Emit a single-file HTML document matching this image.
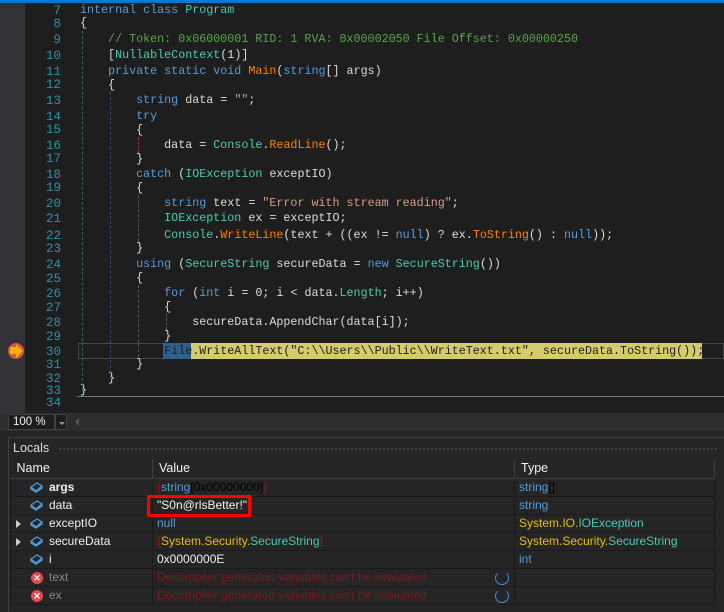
<!DOCTYPE html>
<html><head><style>
*{margin:0;padding:0;box-sizing:border-box}
body{width:724px;height:612px;background:#252526;position:relative;overflow:hidden;font-family:"Liberation Sans",sans-serif}
#ed{position:absolute;left:0;top:0;width:724px;height:413px;background:#1e1e1e}
#topbar{position:absolute;left:0;top:0;width:724px;height:3px;background:#007acc}
#lm{position:absolute;left:0;top:3px;width:25px;height:410px;background:#333337}
.ln{position:absolute;left:25px;width:36px;text-align:right;color:#2b91af;font:12.5px "Liberation Mono",monospace}
.c{position:absolute;left:80px;white-space:pre;color:#dcdcdc;font:11.7px "Liberation Mono",monospace;line-height:14px}
.k{color:#569cd6}.t{color:#4ec9b0}.m{color:#ff8000}.s{color:#d69d85}.cm{color:#57a64a}
.g{position:absolute;border-left:1px dashed}
#zb{position:absolute;left:0;top:413px;width:724px;height:18px;background:#2d2d30}
#zbox{position:absolute;left:8px;top:1px;width:47px;height:16px;border:1px solid #3f3f46;background:#1e1e1e;color:#f1f1f1;font-size:11.5px;padding:1px 4px}
#zdd{position:absolute;left:55px;top:1px;width:12px;height:16px;background:#1e1e1e;border:1px solid #3f3f46}
#lp{position:absolute;left:8px;top:437px;width:716px;height:175px;background:#252526;border-top:1px solid #3f3f46;border-left:1px solid #3f3f46}
#lh{position:absolute;left:13px;top:441px;color:#dcdcdc;font-size:12.5px}
#dots{position:absolute;left:58px;top:447px;width:660px;height:5px;background-image:radial-gradient(#46464a 1px,transparent 1px);background-size:4px 4px}
table{position:absolute;left:10px;top:459px;border-collapse:collapse;font-size:12px}
td{height:18px;border:1px solid #1a1a1a;padding:0 4px;white-space:nowrap;overflow:hidden;background:#252526}
th{height:19px;font-weight:normal;text-align:left;color:#f1f1f1;border-right:1px solid #3f3f46;border-bottom:1px solid #3f3f46;padding:0 6px;font-size:12.5px}
.n{color:#f1f1f1;padding-left:38px;position:relative}
.b{color:#569cd6}.y{color:#e5c100}.tq{color:#4ec9b0}.r{color:#c00}.e{color:#7a1a1a}.gr{color:#888}
.ic{position:absolute;left:19px;top:3px;width:13px;height:11px}
.tri{position:absolute;left:5px;top:5px;width:0;height:0;border-left:5px solid #ccc;border-top:4px solid transparent;border-bottom:4px solid transparent}
.x{position:absolute;left:20px;top:3px;width:12px;height:12px;border-radius:6px;background:#e8474f;color:#fff;font-size:9px;line-height:12px;text-align:center;font-weight:bold}
</style></head><body>
<div id="ed">
<div id="topbar"></div><div id="lm"></div>
<div class="ln" style="top:4px">7</div><div class="c" style="top:3px"><span class="k">internal class</span> <span class="t">Program</span></div>
<div class="ln" style="top:17px">8</div><div class="c" style="top:16px">{</div>
<div class="ln" style="top:33px">9</div><div class="c cm" style="top:32px">    // Token: 0x06000001 RID: 1 RVA: 0x00002050 File Offset: 0x00000250</div>
<div class="ln" style="top:49px">10</div><div class="c" style="top:48px">    [<span class="t">NullableContext</span>(1)]</div>
<div class="ln" style="top:65px">11</div><div class="c" style="top:64px">    <span class="k">private static void</span> <span class="m">Main</span>(<span class="k">string</span>[] args)</div>
<div class="ln" style="top:78px">12</div><div class="c" style="top:78px">    {</div>
<div class="ln" style="top:94px">13</div><div class="c" style="top:93px">        <span class="k">string</span> data = <span class="s">""</span>;</div>
<div class="ln" style="top:110px">14</div><div class="c" style="top:109px">        <span class="k">try</span></div>
<div class="ln" style="top:123px">15</div><div class="c" style="top:123px">        {</div>
<div class="ln" style="top:139px">16</div><div class="c" style="top:138px">            data = <span class="t">Console</span>.<span class="m">ReadLine</span>();</div>
<div class="ln" style="top:152px">17</div><div class="c" style="top:152px">        }</div>
<div class="ln" style="top:168px">18</div><div class="c" style="top:167px">        <span class="k">catch</span> (<span class="t">IOException</span> exceptIO)</div>
<div class="ln" style="top:181px">19</div><div class="c" style="top:181px">        {</div>
<div class="ln" style="top:197px">20</div><div class="c" style="top:196px">            <span class="k">string</span> text = <span class="s">"Error with stream reading"</span>;</div>
<div class="ln" style="top:212px">21</div><div class="c" style="top:211px">            <span class="t">IOException</span> ex = exceptIO;</div>
<div class="ln" style="top:229px">22</div><div class="c" style="top:228px">            <span class="t">Console</span>.<span class="m">WriteLine</span>(text + ((ex != <span class="k">null</span>) ? ex.<span class="m">ToString</span>() : <span class="k">null</span>));</div>
<div class="ln" style="top:242px">23</div><div class="c" style="top:241px">        }</div>
<div class="ln" style="top:258px">24</div><div class="c" style="top:257px">        <span class="k">using</span> (<span class="t">SecureString</span> secureData = <span class="k">new</span> <span class="t">SecureString</span>())</div>
<div class="ln" style="top:272px">25</div><div class="c" style="top:271px">        {</div>
<div class="ln" style="top:287px">26</div><div class="c" style="top:286px">            <span class="k">for</span> (<span class="k">int</span> i = 0; i &lt; data.<span class="t">Length</span>; i++)</div>
<div class="ln" style="top:301px">27</div><div class="c" style="top:300px">            {</div>
<div class="ln" style="top:316px">28</div><div class="c" style="top:315px">                secureData.AppendChar(data[i]);</div>
<div class="ln" style="top:330px">29</div><div class="c" style="top:329px">            }</div>
<div style="position:absolute;left:78px;top:343px;width:646px;height:16px;border:1px solid #464646"></div>
<div style="position:absolute;left:163px;top:343px;width:539px;height:16px;background:#d6cb6b"></div>
<div style="position:absolute;left:163px;top:343px;width:28px;height:16px;background:#2f5f8c"></div>
<div class="ln" style="top:345px">30</div><div class="c" style="top:344px;color:#1e1e1e">            File.WriteAllText("C:\\Users\\Public\\WriteText.txt", secureData.ToString());</div>
<div style="position:absolute;left:8px;top:343px;width:16px;height:16px;border-radius:8px;background:#e05050"></div>
<div style="position:absolute;left:10px;top:347px;width:6px;height:7px;background:#f0b000"></div>
<div style="position:absolute;left:16px;top:344px;border-left:7px solid #f0b000;border-top:7px solid transparent;border-bottom:7px solid transparent"></div>
<div class="ln" style="top:358px">31</div><div class="c" style="top:357px">        }</div>
<div class="ln" style="top:372px">32</div><div class="c" style="top:371px">    }</div>
<div class="ln" style="top:384px">33</div><div class="c" style="top:383px">}</div>
<div style="position:absolute;left:77px;top:396px;width:647px;height:1px;background:#777"></div>
<div class="ln" style="top:396px">34</div>
<div class="g" style="left:82px;top:31px;height:360px;border-color:#2c6a4a"></div>
<div class="g" style="left:110px;top:92px;height:286px;border-color:#2c4a6a"></div>
<div class="g" style="left:138px;top:137px;height:16px;border-color:#a03030"></div>
<div class="g" style="left:138px;top:195px;height:46px;border-color:#555"></div>
<div class="g" style="left:138px;top:285px;height:72px;border-color:#555"></div>
<div class="g" style="left:166px;top:314px;height:16px;border-color:#555"></div>
</div>
<div id="zb"><div id="zbox">100 %</div><div id="zdd"><div style="position:absolute;left:3px;top:7px;border-top:3px solid #999;border-left:3px solid transparent;border-right:3px solid transparent"></div></div>
<div style="position:absolute;left:75px;top:5px;border-right:4px solid #555;border-top:4px solid transparent;border-bottom:4px solid transparent"></div></div>
<div id="lp"></div>
<div id="lh">Locals</div><div id="dots"></div>
<table>
<tr><th style="width:142px">Name</th><th style="width:362px">Value</th><th style="width:200px">Type</th></tr>
<tr><td class="n"><svg class="ic" viewBox="0 0 13 11"><path d="M1 5L7 1L12 4L6 9Z M1 5L1 7L6 10L6 9 M6 10L12 6L12 4" fill="none" stroke="#4a9ee0" stroke-width="1.3"/></svg><b>args</b></td><td><span class="r">{</span><span class="b">string</span>[0x00000000]<span class="r">}</span></td><td><span class="b">string</span>[]</td></tr>
<tr><td class="n"><svg class="ic" viewBox="0 0 13 11"><path d="M1 5L7 1L12 4L6 9Z M1 5L1 7L6 10L6 9 M6 10L12 6L12 4" fill="none" stroke="#4a9ee0" stroke-width="1.3"/></svg>data</td><td style="color:#f1f1f1">"S0n@rlsBetter!"</td><td class="b">string</td></tr>
<tr><td class="n"><span class="tri"></span><svg class="ic" viewBox="0 0 13 11"><path d="M1 5L7 1L12 4L6 9Z M1 5L1 7L6 10L6 9 M6 10L12 6L12 4" fill="none" stroke="#4a9ee0" stroke-width="1.3"/></svg>exceptIO</td><td class="b">null</td><td><span class="y">System.IO.</span><span class="tq">IOException</span></td></tr>
<tr><td class="n"><span class="tri"></span><svg class="ic" viewBox="0 0 13 11"><path d="M1 5L7 1L12 4L6 9Z M1 5L1 7L6 10L6 9 M6 10L12 6L12 4" fill="none" stroke="#4a9ee0" stroke-width="1.3"/></svg>secureData</td><td><span class="r">{</span><span class="y">System.Security.</span><span class="tq">SecureString</span><span class="r">}</span></td><td><span class="y">System.Security.</span><span class="tq">SecureString</span></td></tr>
<tr><td class="n"><svg class="ic" viewBox="0 0 13 11"><path d="M1 5L7 1L12 4L6 9Z M1 5L1 7L6 10L6 9 M6 10L12 6L12 4" fill="none" stroke="#4a9ee0" stroke-width="1.3"/></svg>i</td><td style="color:#f1f1f1">0x0000000E</td><td class="b">int</td></tr>
<tr><td class="n gr"><span class="x">✕</span>text</td><td class="e" style="position:relative">Decompiler generated variables can't be evaluated<span style="position:absolute;right:5px;top:2px;width:14px;height:14px;border:1.5px solid #3c8ee0;border-radius:7px;border-top-color:transparent"></span></td><td></td></tr>
<tr><td class="n gr"><span class="x">✕</span>ex</td><td class="e" style="position:relative">Decompiler generated variables can't be evaluated<span style="position:absolute;right:5px;top:2px;width:14px;height:14px;border:1.5px solid #3c8ee0;border-radius:7px;border-top-color:transparent"></span></td><td></td></tr>
</table>
<div style="position:absolute;left:147px;top:495px;width:104px;height:22px;border:3px solid #f00"></div>
</body></html>
